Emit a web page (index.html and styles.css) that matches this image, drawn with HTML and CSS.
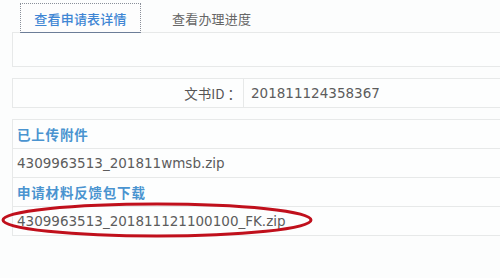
FILE: index.html
```html
<!DOCTYPE html>
<html lang="zh">
<head>
<meta charset="utf-8">
<link rel="stylesheet" href="styles.css">
</head>
<body>
<div class="page">
  <div class="tabs">
    <div class="tab active">查看申请表详情</div>
    <div class="tab">查看办理进度</div>
  </div>
  <div class="panel blank"></div>
  <div class="panel idbox">
    <div class="id-label">文书ID ：</div>
    <div class="id-value">201811124358367</div>
  </div>
  <div class="panel files">
    <div class="row head">已上传附件</div>
    <div class="row">4309963513_201811wmsb.zip</div>
    <div class="row head">申请材料反馈包下载</div>
    <div class="row">4309963513_201811121100100_FK.zip</div>
  </div>
  <svg class="circle" width="316" height="40" viewBox="0 0 316 40">
    <ellipse cx="157" cy="19" rx="154" ry="16" fill="none" stroke="#c0101c" stroke-width="3"/>
  </svg>
</div>
</body>
</html>
```
FILE: styles.css
```css
html, body {
  margin: 0;
  padding: 0;
  background: #fcfdfd;
  overflow: hidden;
}
.page {
  position: relative;
  height: 278px;
  font-family: "DejaVu Sans", "Noto Sans CJK SC", sans-serif;
  color: #5c5c5c;
  font-size: 13.5px;
}
.tabs {
  display: flex;
  align-items: center;
  padding: 3px 0 0 20px;
  height: 30px;
  position: relative;
  z-index: 1;
}
.tab {
  font-family: "Noto Sans CJK SC", sans-serif;
  font-size: 13px;
  color: #666;
  letter-spacing: 0.2px;
}
.tab.active {
  box-sizing: border-box;
  width: 121px;
  height: 30px;
  border: 1px dotted #8a8f99;
  border-bottom: 1px solid #6c7e98;
  color: #3f86d4;
  font-weight: 500;
  display: flex;
  align-items: center;
  justify-content: center;
  background: #fdfdfd;
  margin-right: 31px;
}
.panel {
  margin-left: 12px;
  border: 1px solid #e7e9e9;
  border-right: none;
  background: #fdfefe;
}
.blank {
  height: 33px;
  margin-top: -1px;
}
.idbox {
  margin-top: 11px;
  height: 28px;
  display: flex;
  align-items: center;
}
.id-label {
  box-sizing: border-box;
  width: 231px;
  height: 100%;
  border-right: 1px solid #e7e9e9;
  display: flex;
  align-items: center;
  justify-content: flex-end;
  padding-right: 2px;
  font-family: "Noto Sans CJK SC", sans-serif;
  font-size: 13.5px;
  color: #555;
}
.id-value {
  padding-left: 7px;
}
.files {
  margin-top: 11px;
}
.row {
  height: 28px;
  display: flex;
  align-items: center;
  padding-left: 4px;
  border-bottom: 1px solid #e7e9e9;
}
.row:last-child {
  border-bottom: none;
}
.row.head {
  font-family: "Noto Sans CJK SC", sans-serif;
  font-weight: 700;
  font-size: 13.5px;
  color: #4a94d0;
  letter-spacing: 0.8px;
}
.circle {
  position: absolute;
  left: 0;
  top: 201px;
}
```
